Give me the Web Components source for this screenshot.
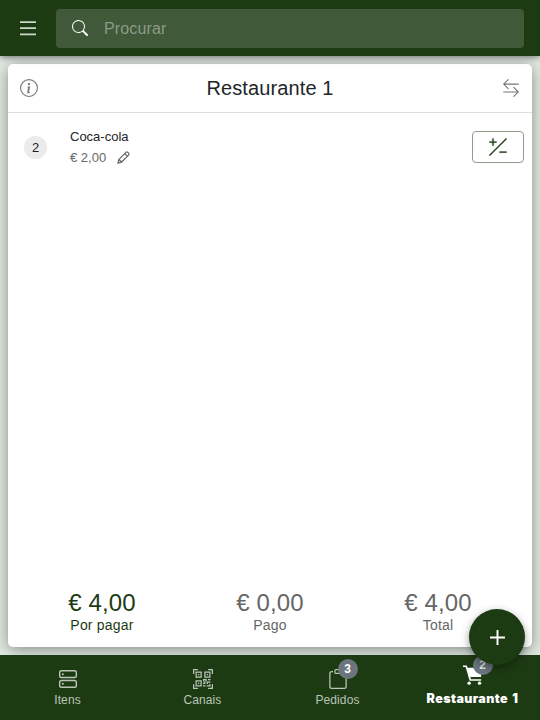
<!DOCTYPE html>
<html lang="pt"><head><meta charset="utf-8"><title>Restaurante 1</title>
<style>html,body{margin:0;height:100%;overflow:hidden}body{font-family:"Liberation Sans",Arial,sans-serif}</style></head>
<body><pos-app></pos-app>
<script>
const define=(name,html,fill)=>customElements.define(name,class extends HTMLElement{
  connectedCallback(){
    if(this.shadowRoot)return;
    const t=document.createElement('template');t.innerHTML=html;
    const r=this.attachShadow({mode:'open'});r.append(t.content.cloneNode(true));
    if(fill)fill(this,r);
  }
});
const icons={
 menu:'<path d="M0 .2h16v1.700H0zM0 6.300h16V8H0zM0 12.500h16v1.700H0z"/>',
 search:'<path d="M11.742 10.344a6.5 6.5 0 1 0-1.397 1.398h-.001c.03.04.062.078.098.115l3.85 3.85a1 1 0 0 0 1.415-1.414l-3.85-3.85a1.007 1.007 0 0 0-.115-.1zM12 6.5a5.5 5.5 0 1 1-11 0 5.5 5.5 0 0 1 11 0z"/>',
 info:'<path d="M8 15A7 7 0 1 1 8 1a7 7 0 0 1 0 14zm0 1A8 8 0 1 0 8 0a8 8 0 0 0 0 16z"/><path d="m8.93 6.588-2.29.287-.082.38.45.083c.294.07.352.176.288.469l-.738 3.468c-.194.897.105 1.319.808 1.319.545 0 1.178-.252 1.465-.598l.088-.416c-.2.176-.492.246-.686.246-.275 0-.375-.193-.304-.533L8.93 6.588zM9 4.5a1 1 0 1 1-2 0 1 1 0 0 1 2 0z" stroke="currentColor" stroke-width=".2"/>',
 swap:'<path fill-rule="evenodd" d="M1 11.5a.5.5 0 0 0 .5.5h11.793l-3.147 3.146a.5.5 0 0 0 .708.708l4-4a.5.5 0 0 0 0-.708l-4-4a.5.5 0 0 0-.708.708L13.293 11H1.5a.5.5 0 0 0-.5.5zm14-7a.5.5 0 0 1-.5.5H2.707l3.147 3.146a.5.5 0 1 1-.708.708l-4-4a.5.5 0 0 1 0-.708l4-4a.5.5 0 1 1 .708.708L2.707 4H14.5a.5.5 0 0 1 .5.5z"/>',
 edit:'<g fill="none" stroke="currentColor" stroke-width="1.5" stroke-linejoin="round"><path d="M1 15l1.400-4.700L11 1.700q1.100-1 2.200 0l1.100 1.100q1 1.100 0 2.200L5.700 13.600zM9.600 3.200l3.200 3.200M2.500 10.400l3.100 3.100"/></g>',
 plusminus:'<path d="m1.854 14.854 13-13a.5.5 0 0 0-.708-.708l-13 13a.5.5 0 0 0 .708.708M4 1a.5.5 0 0 1 .5.5v2h2a.5.5 0 0 1 0 1h-2v2a.5.5 0 0 1-1 0v-2h-2a.5.5 0 0 1 0-1h2v-2A.5.5 0 0 1 4 1m5 11a.5.5 0 0 1 .5-.5h5a.5.5 0 0 1 0 1h-5A.5.5 0 0 1 9 12" stroke="currentColor" stroke-width=".2"/>',
 stack:'<g fill="none" stroke="currentColor" stroke-width="1.250"><rect x=".6" y=".6" width="14.800" height="6.100" rx="1.600"/><rect x=".6" y="9.300" width="14.800" height="6.100" rx="1.600"/></g><circle cx="3.400" cy="3.700" r=".9"/><circle cx="3.400" cy="12.300" r=".9"/>',
 qr:'<path d="M0 .5A.5.5 0 0 1 .5 0h3a.5.5 0 0 1 0 1H1v2.5a.5.5 0 0 1-1 0zm12 0a.5.5 0 0 1 .5-.5h3a.5.5 0 0 1 .5.5v3a.5.5 0 0 1-1 0V1h-2.5a.5.5 0 0 1-.5-.5M.5 12a.5.5 0 0 1 .5.5V15h2.5a.5.5 0 0 1 0 1h-3a.5.5 0 0 1-.5-.5v-3a.5.5 0 0 1 .5-.5m15 0a.5.5 0 0 1 .5.5v3a.5.5 0 0 1-.5.5h-3a.5.5 0 0 1 0-1H15v-2.500a.5.5 0 0 1 .5-.5M4 4h1v1H4z"/><path d="M7 2H2v5h5zM3 3h3v3H3zm2 8H4v1h1z"/><path d="M7 9H2v5h5zm-4 1h3v3H3zm8-6h1v1h-1z"/><path d="M9 2h5v5H9zm1 1v3h3V3zM8 8v2h1v1H8v1h2v-2h1v2h1v-1h2v-1h-3V8zm2 2H9V9h1zm4 2h-1v1h-2v1h3zm-4 2v-1H8v1z"/><path d="M12 9h2V8h-2z"/>',
 clip:'<path d="M4 1.500H3a2 2 0 0 0-2 2V14a2 2 0 0 0 2 2h10a2 2 0 0 0 2-2V3.500a2 2 0 0 0-2-2h-1v1h1a1 1 0 0 1 1 1V14a1 1 0 0 1-1 1H3a1 1 0 0 1-1-1V3.500a1 1 0 0 1 1-1h1z"/><path d="M9.500 1a.5.5 0 0 1 .5.5v1a.5.5 0 0 1-.5.5h-3a.5.5 0 0 1-.5-.5v-1a.5.5 0 0 1 .5-.5zm-3-1A1.500 1.500 0 0 0 5 1.500v1A1.500 1.500 0 0 0 6.500 4h3A1.500 1.500 0 0 0 11 2.500v-1A1.500 1.500 0 0 0 9.500 0z"/>',
 cart:'<path d="M0 .3h2.900L3.700 2.200H14.500V9.500H5.800l.6 1.900H14.500v1.200H5.300L2.100 1.500H0z"/><circle cx="4.900" cy="14.500" r="1.350"/><circle cx="13.200" cy="14.500" r="1.350"/>',
 plus:'<path d="M7.100 1h1.800v6.100H15v1.800H8.900V15H7.100V8.900H1V7.100h6.100z"/>'
};
define('ui-icon','<style>:host{display:block;flex:none;width:var(--s,18px);height:var(--s,18px)}svg{display:block;width:100%;height:100%;overflow:visible}</style><svg viewBox="0 0 16 16" fill="currentColor"></svg>',(e,r)=>{r.querySelector('svg').innerHTML=icons[e.getAttribute('name')]||''});
define('search-bar',`<style>:host{display:flex;flex:none;height:56px;box-sizing:border-box;padding:9px 16px 8px 20px;gap:20px;align-items:center;background:#1d3b13;color:#ced5cc;box-shadow:0 1px 7px rgba(0,0,0,.55);position:relative;z-index:2}
.field{flex:1;height:39px;border-radius:4px;background:#405939;display:flex;align-items:center;padding:0 0 1px 16px;gap:16px;color:#fff;box-sizing:border-box}.field span{color:#8c9b88;font-size:16px;line-height:20px;letter-spacing:.13px;padding-top:2px}</style>
<ui-icon name="menu" style="--s:16px"></ui-icon><div class="field"><ui-icon name="search" style="--s:16px"></ui-icon><span>Procurar</span></div>`);
define('title-bar',`<style>:host{height:48px;flex:none;display:flex;align-items:center;justify-content:space-between;padding:0 12px;border-bottom:1px solid #dedede;color:#777}h1{font-size:20px;font-weight:400;color:#212529;margin:0;letter-spacing:.12px}</style><ui-icon name="info"></ui-icon><h1><slot></slot></h1><ui-icon name="swap"></ui-icon>`);
define('order-item',`<style>:host{display:flex;align-items:center;padding:6px 8px 0 16px;height:56px;color:#212529;font-size:13px}.q{width:23px;height:23px;border-radius:50%;background:#ebebeb;display:grid;place-items:center;margin-right:23px}.t{flex:1;line-height:21px}.p{display:flex;gap:11px;color:#666;align-items:center}button{font:inherit;width:52px;height:32px;box-sizing:border-box;background:#fff;border:1px solid #8e9d89;border-radius:4px;display:grid;place-items:center;color:#1d3b13;padding:0}</style><span class="q"><slot name="quantity"></slot></span><div class="t"><div><slot></slot></div><div class="p"><slot name="price"></slot><ui-icon name="edit" style="--s:13px"></ui-icon></div></div><button aria-label="Quantidade"><ui-icon name="plusminus" style="--s:20px"></ui-icon></button>`);
define('total-value',`<style>:host{flex:1;text-align:center;color:var(--c,#666)}.v{font-size:24px;line-height:26px;letter-spacing:.1px}.l{font-size:14px;line-height:18px;letter-spacing:.2px}</style><div class="v"><slot></slot></div><div class="l"></div>`,(e,r)=>r.querySelector('.l').textContent=e.getAttribute('label'));
define('order-card',`<style>:host{display:flex;flex:1;flex-direction:column;background:#fff;border-radius:5px;margin:8px;box-shadow:0 3px 16px rgba(0,0,0,.42)}.body{flex:1}.totals{display:flex;padding:0 10px 13px}</style>
<title-bar>Restaurante 1</title-bar><div class="body"><order-item><span slot="quantity">2</span>Coca-cola<span slot="price">€ 2,00</span></order-item></div><div class="totals"><total-value label="Por pagar" style="--c:#1d3b13">€ 4,00</total-value><total-value label="Pago">€ 0,00</total-value><total-value label="Total">€ 4,00</total-value></div>`);
define('nav-tab',`<style>:host{flex:1;min-width:0;display:flex;flex-direction:column;align-items:center;color:#bbc4b8;font-size:12px;padding-top:14px;box-sizing:border-box}:host([active]){color:#fff;padding-top:10px}.i{position:relative;height:20px;display:grid;place-items:center}.l{margin-top:4px;line-height:14px;white-space:nowrap;letter-spacing:.1px}:host([active]) .l{font:900 12.500px/14px Inter,sans-serif;letter-spacing:.4px;word-spacing:1.500px;margin-top:7px}b{position:absolute;left:10px;top:-10px;width:20px;height:20px;border-radius:50%;background:#6c757d;color:#fff;display:grid;place-items:center;font:bold 12px "Liberation Sans",sans-serif}:host([active]) b{color:#dfe2e4}</style><div class="i"></div><div class="l"><slot></slot></div>`,(e,r)=>{const box=r.querySelector('.i'),i=document.createElement('ui-icon');i.setAttribute('name',e.getAttribute('icon'));i.style.setProperty('--s',e.getAttribute('size')||'18px');box.append(i);if(e.hasAttribute('badge')){const b=document.createElement('b');b.textContent=e.getAttribute('badge');box.append(b)}});
define('bottom-nav',`<style>:host{display:flex;flex:none;height:65px;background:#1d3b13;position:relative;z-index:1}</style><nav-tab icon="stack" size="18px">Itens</nav-tab><nav-tab icon="qr" size="20px">Canais</nav-tab><nav-tab icon="clip" size="20px" badge="3">Pedidos</nav-tab><nav-tab icon="cart" size="20px" badge="2" active>Restaurante 1</nav-tab>`);
define('add-button',`<style>:host{position:absolute;right:15px;bottom:55px;width:56px;height:56px;border-radius:50%;background:#1d3b13;color:#fff;display:grid;place-items:center;box-shadow:0 3px 8px rgba(0,0,0,.4);z-index:3}</style><ui-icon name="plus" style="--s:17px"></ui-icon>`);
define('pos-app',`<style>:host{display:flex;flex-direction:column;position:relative;width:540px;height:720px;background:#e3ece4;overflow:hidden}</style><search-bar></search-bar><order-card></order-card><bottom-nav></bottom-nav><add-button></add-button>`);
</script></body></html>
